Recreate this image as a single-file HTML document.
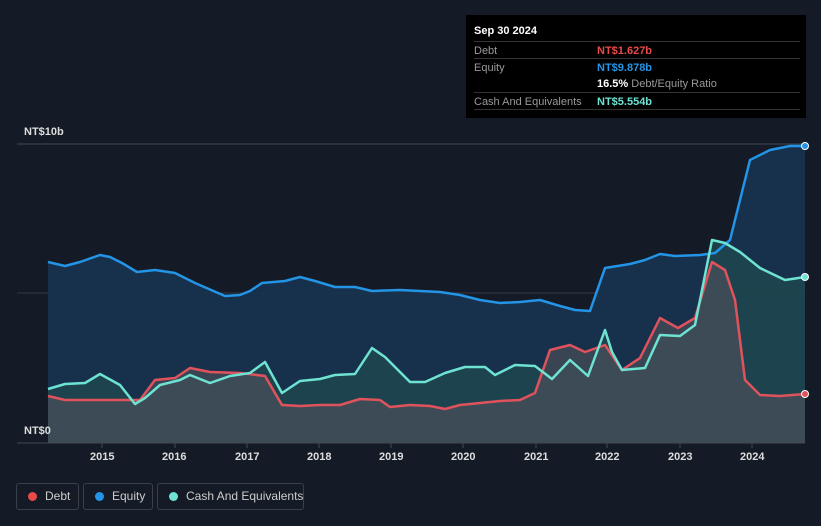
<!DOCTYPE html><html><head><style>
body{margin:0;background:#151b26;width:821px;height:526px;overflow:hidden;font-family:"Liberation Sans",sans-serif;position:relative}
.tt{position:absolute;left:466px;top:15px;width:340px;height:103px;background:#000;color:#fff;font-size:11px}
.r{position:absolute;left:8px;right:6px;border-top:1px solid #333;height:17px}
.l{position:absolute;left:0;top:3px;color:#999}
.v{position:absolute;left:123px;top:3px;font-weight:bold}
.lg{position:absolute;top:483px;height:27px;border:1px solid #3a404a;border-radius:3px;color:#ccc;font-size:12px;box-sizing:border-box;line-height:25px;white-space:nowrap}
.lg i{position:absolute;left:11px;top:8px;width:9px;height:9px;border-radius:50%}
.lg span{position:absolute;left:28px}
.ax{position:absolute;top:451px;color:#ddd;font-size:11px;font-weight:bold}
</style></head><body>
<svg width="821" height="526" style="position:absolute;left:0;top:0">
<line x1="17" y1="144" x2="805" y2="144" stroke="#444a54"/>
<line x1="17" y1="293" x2="805" y2="293" stroke="#333a44"/>
<path d="M48,262 L65,266 80,262 100,255 110,257 122,263 137,272 155,270 175,273 195,283 225,296 240,295 250,291 262,283 285,281 300,277 315,281 335,287 355,287 372,291 400,290 420,291 440,292 460,295 480,300 500,303 520,302 540,300 560,306 575,310 590,311 605,268 630,264 645,260 660,254 675,256 700,255 715,253 730,240 740,200 750,160 770,150 790,146 805,146 L805,443 L48,443Z" fill="#173350" opacity="0.9"/>
<path d="M48,389 L65,384 85,383 100,374 120,385 135,404 145,398 160,385 180,380 190,375 210,383 230,376 250,373 265,362 282,393 300,381 320,379 335,375 355,374 372,348 385,357 400,372 410,382 425,382 445,373 465,367 485,367 495,375 515,365 535,366 552,379 570,360 588,376 605,330 612,352 622,370 645,368 660,335 680,336 695,325 712,240 725,243 740,252 760,268 785,280 805,277 L805,443 L48,443Z" fill="#1f4a4f" opacity="0.8"/>
<path d="M48,396 L65,400 100,400 140,400 155,380 175,378 190,368 210,372 240,373 265,376 282,405 300,406 320,405 340,405 360,399 380,400 390,407 410,405 430,406 445,409 460,405 480,403 500,401 520,400 535,393 550,350 570,345 585,352 605,345 622,370 640,358 660,318 678,328 695,318 712,262 725,270 735,300 745,380 760,395 780,396 805,394 L805,443 L48,443Z" fill="#4a4f58" opacity="0.7"/>
<g fill="none" stroke-width="2.5" stroke-linejoin="round">
<path d="M48,262 L65,266 80,262 100,255 110,257 122,263 137,272 155,270 175,273 195,283 225,296 240,295 250,291 262,283 285,281 300,277 315,281 335,287 355,287 372,291 400,290 420,291 440,292 460,295 480,300 500,303 520,302 540,300 560,306 575,310 590,311 605,268 630,264 645,260 660,254 675,256 700,255 715,253 730,240 740,200 750,160 770,150 790,146 805,146" stroke="#2394e6"/>
<path d="M48,396 L65,400 100,400 140,400 155,380 175,378 190,368 210,372 240,373 265,376 282,405 300,406 320,405 340,405 360,399 380,400 390,407 410,405 430,406 445,409 460,405 480,403 500,401 520,400 535,393 550,350 570,345 585,352 605,345 622,370 640,358 660,318 678,328 695,318 712,262 725,270 735,300 745,380 760,395 780,396 805,394" stroke="#e0525c"/>
<path d="M48,389 L65,384 85,383 100,374 120,385 135,404 145,398 160,385 180,380 190,375 210,383 230,376 250,373 265,362 282,393 300,381 320,379 335,375 355,374 372,348 385,357 400,372 410,382 425,382 445,373 465,367 485,367 495,375 515,365 535,366 552,379 570,360 588,376 605,330 612,352 622,370 645,368 660,335 680,336 695,325 712,240 725,243 740,252 760,268 785,280 805,277" stroke="#6ee3d3"/>
</g>
<line x1="17" y1="443" x2="805" y2="443" stroke="#444a54"/>
<g stroke="#444a54"><line x1="102" y1="443" x2="102" y2="448"/><line x1="175" y1="443" x2="175" y2="448"/><line x1="247" y1="443" x2="247" y2="448"/><line x1="319" y1="443" x2="319" y2="448"/><line x1="391" y1="443" x2="391" y2="448"/><line x1="463" y1="443" x2="463" y2="448"/><line x1="536" y1="443" x2="536" y2="448"/><line x1="607" y1="443" x2="607" y2="448"/><line x1="680" y1="443" x2="680" y2="448"/><line x1="752" y1="443" x2="752" y2="448"/></g>
<circle cx="805" cy="146" r="3.5" fill="#2394e6" stroke="#fff"/>
<circle cx="805" cy="277" r="3.5" fill="#6ee3d3" stroke="#fff"/>
<circle cx="805" cy="394" r="3.5" fill="#e0525c" stroke="#fff"/>
</svg>
<div style="position:absolute;left:24px;top:126px;color:#ddd;font-size:11px;font-weight:bold">NT$10b</div>
<div style="position:absolute;left:24px;top:425px;color:#ddd;font-size:11px;font-weight:bold">NT$0</div>
<div class="ax" style="left:90px">2015</div><div class="ax" style="left:162px">2016</div><div class="ax" style="left:235px">2017</div><div class="ax" style="left:307px">2018</div><div class="ax" style="left:379px">2019</div><div class="ax" style="left:451px">2020</div><div class="ax" style="left:524px">2021</div><div class="ax" style="left:595px">2022</div><div class="ax" style="left:668px">2023</div><div class="ax" style="left:740px">2024</div>
<div class="tt">
<div style="position:absolute;left:8px;top:10px;font-weight:bold;font-size:11px">Sep 30 2024</div>
<div class="r" style="top:26px"><span class="l">Debt</span><span class="v" style="color:#e84a4a">NT$1.627b</span></div>
<div class="r" style="top:43px"><span class="l">Equity</span><span class="v" style="color:#2394e6">NT$9.878b</span></div>
<div style="position:absolute;left:131px;top:63px"><b>16.5%</b> <span style="color:#999">Debt/Equity Ratio</span></div>
<div class="r" style="top:77px"><span class="l">Cash And Equivalents</span><span class="v" style="color:#6ee3d3">NT$5.554b</span></div>
<div class="r" style="top:94px"></div>
</div>
<div class="lg" style="left:16px;width:63px"><i style="background:#e84a4a"></i><span>Debt</span></div>
<div class="lg" style="left:83px;width:70px"><i style="background:#2394e6"></i><span>Equity</span></div>
<div class="lg" style="left:157px;width:147px"><i style="background:#6ee3d3"></i><span>Cash And Equivalents</span></div>
</body></html>
